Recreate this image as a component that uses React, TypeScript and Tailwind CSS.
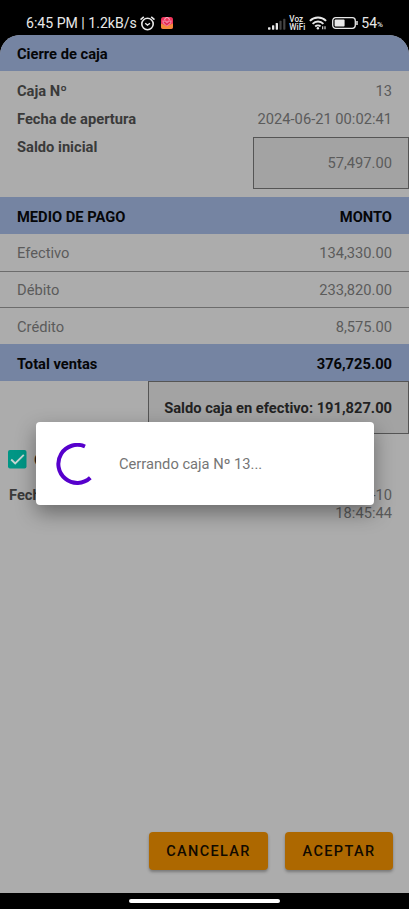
import clsx from 'clsx';

const payments = [
  { name: 'Efectivo', amount: '134,330.00' },
  { name: 'Débito', amount: '233,820.00' },
  { name: 'Crédito', amount: '8,575.00' },
];

function StatusBar() {
  return (
    <div className="flex h-[35px] items-center justify-between pl-[26px] pr-[26px] pt-[11px] text-[14px] text-[#e8e8e8]">
      <div className="flex items-center whitespace-nowrap">
        <span className="text-[14.1px] leading-4">6:45 PM | 1.2kB/s</span>
        <svg className="ml-[3px] h-[15px] w-[15px]" viewBox="0 0 15 15" fill="none" stroke="currentColor" strokeWidth="1.6">
          <circle cx="7.5" cy="8" r="5.7" />
          <path d="M.5 3.7 3.8.9M14.5 3.7 11.200.9" />
          <path d="m5.2 7.2 2.3 1.9 2.5-1.900" strokeWidth="1.3" />
        </svg>
        <svg className="ml-[6px] h-3 w-3" viewBox="0 0 12 12">
          <rect width="12" height="12" rx="2.5" fill="#f0345c" />
          <path d="M0 6.5 6 9l6-2.5v3A2.5 2.5 0 0 1 9.5 12h-7A2.5 2.5 0 0 1 0 9.5Z" fill="#f58a3b" />
          <path d="M3.7 3.2V2.8a2.3 2.3 0 0 1 4.6 0v.4" fill="none" stroke="#f7c5d4" strokeWidth=".9" />
          <path d="M1.2 3.5h3.6L6 4.5l1.2-1h3.6l-.6 3L6 9.5 1.8 6.500Z" fill="#f27d9d" />
          <path d="m3.2 5 2.6 2.5L9 5" fill="none" stroke="#e3264d" strokeWidth="1.4" />
        </svg>
      </div>
      <div className="flex items-center">
        <svg className="mt-px h-[12px] w-[18px]" viewBox="0 0 18 12" fill="currentColor">
          <rect x="0" y="9.2" width="2.5" height="2.5" rx=".6" />
          <rect x="4" y="7.2" width="2.3" height="4.5" rx=".6" />
          <rect x="7.7" y="5" width="2.3" height="6.7" rx=".6" />
          <rect x="11.4" y="2.8" width="2.2" height="8.9" rx=".6" fill="#444" />
          <rect x="15.2" y=".8" width="2.2" height="10.9" rx=".6" fill="#444" />
        </svg>
        <div className="ml-[3px] w-[17px] whitespace-pre-line text-[8.2px] font-medium leading-[8px]">
          {'Voz\nWiFi'}
        </div>
        <svg className="ml-[3px] h-[14px] w-[18px]" viewBox="0 0 18 14" fill="none" stroke="currentColor" strokeWidth="1.9">
          <path d="M.9 4.9a11.5 11.5 0 0 1 16.2 0" />
          <path d="M3.6 7.8a7.6 7.6 0 0 1 10.8 0" />
          <path d="M6.2 10.5a3.9 3.9 0 0 1 5.4-.1" />
          <circle cx="8.9" cy="12.3" r="1.2" fill="currentColor" stroke="none" />
          <path d="M13.7 13.3v-3M16 10.3v3" strokeWidth="1.1" />
        </svg>
        <svg className="ml-[5px] h-[12px] w-[26px]" viewBox="0 0 26 12" fill="none">
          <rect x=".7" y=".7" width="22.6" height="10.6" rx="3" stroke="currentColor" strokeWidth="1.3" />
          <rect x="2.6" y="2.6" width="10" height="6.8" rx="1" fill="currentColor" />
          <path d="M25 4v4" stroke="currentColor" strokeWidth="1.5" />
        </svg>
        <span className="ml-[3px] text-[14px] leading-4">54</span>
        <span className="mt-[3px] text-[8px] font-medium leading-3">%</span>
      </div>
    </div>
  );
}

function Band({ left, right, className }: { left: string; right?: string; className?: string }) {
  return (
    <div className={clsx('flex items-center justify-between bg-[#7584a2] px-[17px] font-bold text-[#050608]', className)}>
      <span>{left}</span>
      <span>{right}</span>
    </div>
  );
}

function ActionButton({ label, className }: { label: string; className?: string }) {
  return (
    <button
      type="button"
      className={clsx(
        'h-[38px] rounded-[4px] bg-[#ad6800] pt-[2px] text-[14.5px] font-medium tracking-[1.35px] text-[#110a00] shadow-[0_2px_3px_rgba(0,0,0,0.3)]',
        className
      )}
    >
      {label}
    </button>
  );
}

function ProgressDialog() {
  return (
    <div className="absolute left-[36px] top-[422px] flex h-[83px] w-[338px] items-center rounded-[4px] bg-white pl-[20px] shadow-[0_8px_20px_rgba(0,0,0,0.38)]">
      <svg className="h-[42px] w-[42px]" viewBox="0 0 42 42" fill="none" stroke="#5600cc" strokeWidth="4">
        <path d="M29 3.5A19 19 0 1 0 34.3 34.8" />
      </svg>
      <span className="ml-[21px] mt-px text-[#757575]">Cerrando caja Nº 13...</span>
    </div>
  );
}

export default function App() {
  return (
    <div className="relative flex h-[909px] w-[409px] flex-col overflow-hidden bg-black font-['Roboto',sans-serif] text-[14.7px] leading-[18px]">
      <StatusBar />

      <main className="flex h-[858px] flex-col overflow-hidden rounded-t-[20px] bg-[#acacac] text-[#5b5b5b]">
        <Band left="Cierre de caja" className="h-[36px] pt-[2px]" />

        <div className="flex h-[126px] flex-col pt-[11px]">
          <div className="flex h-[28px] justify-between px-[17px]">
            <span className="font-bold text-[#3a3a3a]">Caja Nº</span>
            <span>13</span>
          </div>
          <div className="flex h-[27px] justify-between px-[17px]">
            <span className="font-bold text-[#3a3a3a]">Fecha de apertura</span>
            <span>2024-06-21 00:02:41</span>
          </div>
          <div className="flex justify-between pl-[17px]">
            <span className="pt-px font-bold text-[#3a3a3a]">Saldo inicial</span>
            <div className="flex h-[52px] w-[156px] items-center justify-end border border-[#555] bg-[#a3a3a3] pr-[16px]">
              57,497.00
            </div>
          </div>
        </div>

        <Band left="MEDIO DE PAGO" right="MONTO" className="h-[37px] pt-[2px]" />
        {payments.map((p, i) => (
          <div
            key={p.name}
            className={clsx(
              'flex items-center justify-between px-[17px] pt-px',
              i < 2 ? 'border-b border-[#6c6c6c]' : '',
              i === 0 ? 'h-[38px]' : 'h-[36px]'
            )}
          >
            <span>{p.name}</span>
            <span>{p.amount}</span>
          </div>
        ))}
        <Band left="Total ventas" right="376,725.00" className="h-[37px] pt-[2px]" />

        <div className="ml-auto flex h-[53px] w-[261px] items-center justify-end border border-[#555] bg-[#a3a3a3] pr-[16px] pt-px font-bold text-[#222]">
          Saldo caja en efectivo: 191,827.00
        </div>

        <div className="mt-[16px] flex items-center pl-[8px]">
          <svg className="h-[19px] w-[19px]" viewBox="0 0 19 19" fill="none">
            <rect width="18.5" height="18.5" rx="2" fill="#019685" />
            <path d="m3.2 9.5 4 4 8.6-8.6" stroke="#c6d6d4" strokeWidth="1.9" />
          </svg>
          <span className="ml-[7px] font-medium text-[#222]">Cerrar caja</span>
        </div>

        <div className="mt-[17px] flex justify-between pl-[9px] pr-[17px]">
          <span className="font-bold text-[#3a3a3a]">Fecha de cierre</span>
          <span className="w-[80px] text-right">2024-07-10 18:45:44</span>
        </div>

        <div className="mb-[23px] mt-auto flex justify-end gap-[17px] pr-[16px]">
          <ActionButton label="CANCELAR" className="w-[119px]" />
          <ActionButton label="ACEPTAR" className="w-[108px]" />
        </div>
      </main>

      <div className="mx-auto mt-[6px] h-[4px] w-[151px] rounded-full bg-white" />

      <ProgressDialog />
    </div>
  );
}
